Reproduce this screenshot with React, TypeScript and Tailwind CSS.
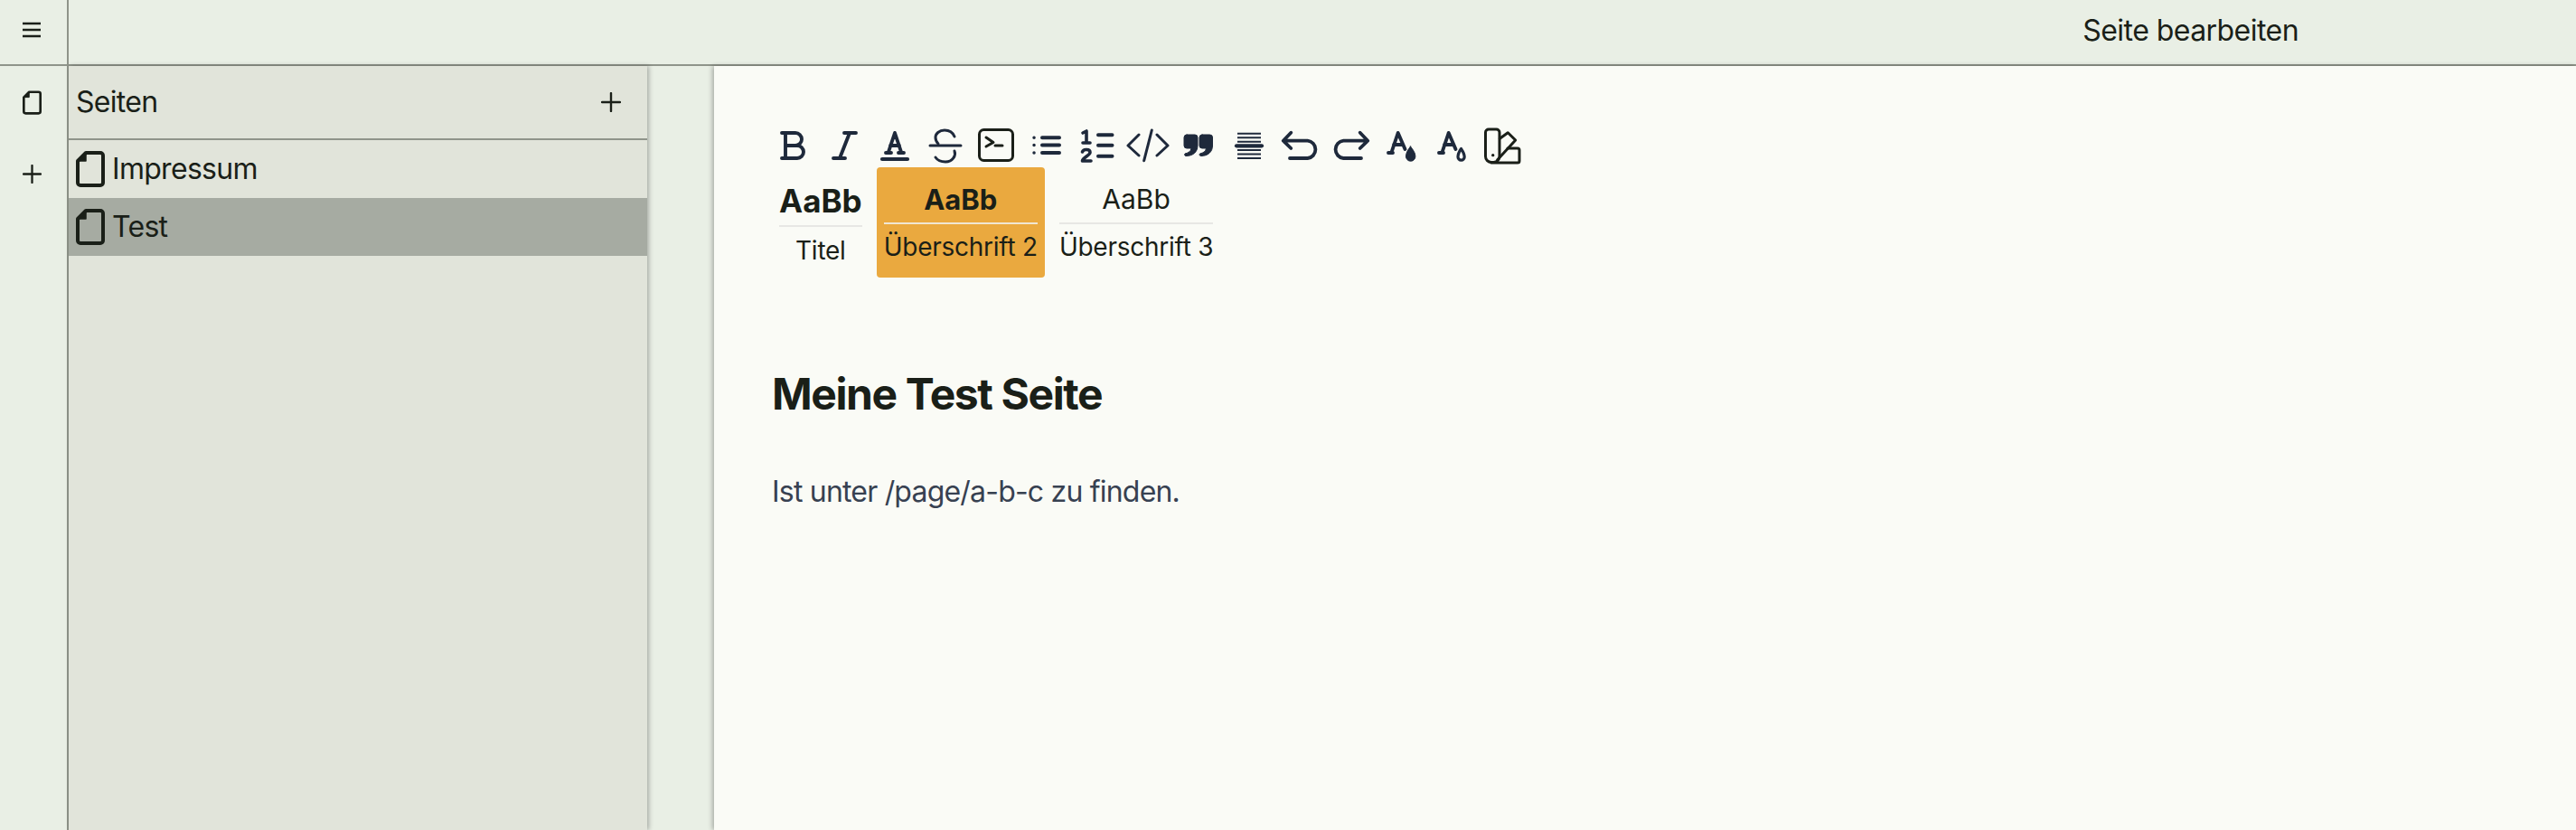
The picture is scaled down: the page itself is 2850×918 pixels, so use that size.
function Ico({ children, className = "", sw = 3.2 }: { children: React.ReactNode; className?: string; sw?: number }) {
  return (
    <svg
      viewBox="0 0 40 40"
      className={`size-10 overflow-visible ${className}`}
      fill="none"
      stroke="currentColor"
      strokeWidth={sw}
      strokeLinecap="round"
      strokeLinejoin="round"
    >
      {children}
    </svg>
  );
}

function DocIcon({ className }: { className: string }) {
  return (
    <svg viewBox="0 0 32 40" className={className} fill="none" stroke="currentColor" strokeLinejoin="round" strokeLinecap="round">
      <path d="M11 2H27a3 3 0 0 1 3 3V35a3 3 0 0 1-3 3H5a3 3 0 0 1-3-3V11Z" strokeWidth="4" />
      <path d="M11 3V11H3Z" fill="currentColor" strokeWidth="1.5" />
    </svg>
  );
}

function PlusIcon({ className }: { className: string }) {
  return (
    <svg viewBox="0 0 22 22" className={className} fill="none" stroke="currentColor" strokeWidth="2.4" strokeLinecap="round">
      <path d="M11 1V21M1 11H21" />
    </svg>
  );
}

const tools: React.ReactNode[] = [
  <Ico key="bold" sw={3.9}>
    <path d="M7 6H22a7 7 0 0 1 0 14H11M11 6V34M7 34H24a7 7 0 0 0 0-14" />
  </Ico>,
  <Ico key="italic" sw={3.9}>
    <path d="M20 6H33M26 6L15 34M8 34H21" />
  </Ico>,
  <Ico key="underline" sw={3.9}>
    <path d="M20 6L13 27M20 6L27 27M15 20H25M10 28H16M24 28H30" />
    <path d="M6 35H34" strokeWidth="4.2" />
  </Ico>,
  <Ico key="strike" sw={3}>
    <path d="M30 10C28 5 24 3 19 3C13 3 9 7 9 11C9 14 10 16 12 18" />
    <path d="M3 20H37" />
    <path d="M30 26C32 31 28 38 20 38C15 38 11 36 9 33" />
  </Ico>,
  <Ico key="terminal" sw={3} className="text-[#1a1f18]">
    <rect x="1.500" y="2.500" width="37" height="34" rx="5" />
    <path d="M9 11L17 16.500L9 21M19 20H27" />
  </Ico>,
  <Ico key="bullets" sw={4}>
    <path d="M15 11.300H34M15 19.500H34M15 28H34" />
    <path d="M6 11.300H6.100M6 19.500H6.100M6 28H6.100" strokeWidth="3.4" />
  </Ico>,
  <Ico key="ordered" sw={4}>
    <path d="M21 8.300H36.500M21 19.700H36.500M21 31.700H36.500" />
    <path d="M4 6L8 4V16.500M4 17H12" strokeWidth="3.6" />
    <path d="M3.500 27C4.500 23.500 12 23.500 12 27.500C12 31 4 33 3.500 37H13" strokeWidth="3.6" />
  </Ico>,
  <Ico key="code" sw={3}>
    <path d="M10 8L-2 20L10 31M30 8L42 20L30 31M24.300 3L15.700 36.700" />
  </Ico>,
  <Ico key="quote" sw={1}>
    <path
      fill="currentColor"
      d="M7 8H16a3 3 0 0 1 3 3V20C19 27 14 31.500 6 31.500a1.500 1.500 0 0 1-1-2.500C9 28 11.500 26.500 12 23H7a3 3 0 0 1-3-3V11a3 3 0 0 1 3-3Z"
    />
    <path
      fill="currentColor"
      d="M24 8H32.500a3 3 0 0 1 3 3V20C35.500 27 30.500 31.500 22.500 31.500a1.500 1.500 0 0 1-1-2.500C25.500 28 28 26.500 28.500 23H24a3 3 0 0 1-3-3V11a3 3 0 0 1 3-3Z"
    />
  </Ico>,
  <Ico key="align" sw={1.9}>
    <path strokeLinecap="butt" d="M7 6.700H33M7 11.200H33M7 15.700H33M7 25H33M7 29.500H33M7 34H33" />
    <path d="M6 20.300H34" strokeWidth="4.200" />
  </Ico>,
  <Ico key="undo" sw={3.8}>
    <path d="M10.300 5.700L1.700 14.700L10.300 23M2 14.700H28.700a9.700 9.700 0 0 1 0 19.300H9" />
  </Ico>,
  <Ico key="redo" sw={3.8}>
    <path d="M30.700 5.700L39.300 14.700L30.700 23M39 14.700H12.300a9.700 9.700 0 0 0 0 19.300H32" />
  </Ico>,
  <Ico key="color" sw={3.9}>
    <path d="M16.700 6L9.500 27.500M16.700 6L24.500 24M12 19H22M6 28H11" />
    <path fill="currentColor" strokeWidth="1" d="M30.500 21C27.500 25 25.500 28 25.500 32a5.200 5.200 0 0 0 10.400 0C35.900 28 33.500 25 30.500 21Z" />
  </Ico>,
  <Ico key="color-outline" sw={3.9}>
    <path d="M16.700 6L9.500 27.500M16.700 6L24.500 24M12 19H22M6 28H11" />
    <path strokeWidth="3.2" d="M30.500 23.500C28.500 26.500 27 29 27 32.500a3.600 3.600 0 0 0 7.200 0C34.200 29 32.500 26.500 30.500 23.500Z" />
  </Ico>,
  <Ico key="swatch" sw={3} className="text-[#1a1f18]">
    <path d="M5 2H13.500a3.500 3.500 0 0 1 3.500 3.500V32a6.500 6.500 0 0 1-6.500 6.500H8A6.500 6.500 0 0 1 1.500 32V5.500A3.500 3.500 0 0 1 5 2Z" />
    <path d="M17.300 12.300L26.300 5.700L34.700 14L14.700 35.700" />
    <path d="M26 23H37a2 2 0 0 1 2 2V37a2 2 0 0 1-2 2H8" />
    <path d="M9.700 30.700H9.800" strokeWidth="3.200" />
  </Ico>,
];

function StyleCard(props: {
  sample: string;
  label: string;
  active?: boolean;
  sampleClass: string;
  labelClass: string;
}) {
  return (
    <div className={`flex h-[122px] flex-col rounded-[4px] px-2 pt-[10px] ${props.active ? "bg-[#eaa93f]" : ""}`}>
      <div className={`border-b-2 text-center ${props.active ? "border-[#f0e6d2]" : "border-[#e7e7e4]"} ${props.sampleClass}`}>
        {props.sample}
      </div>
      <div className={`text-center text-[28px] tracking-[-0.25px] ${props.labelClass}`}>{props.label}</div>
    </div>
  );
}

export default function App() {
  return (
    <div className="flex h-screen w-full flex-col overflow-hidden bg-[#e9efe5] font-['Inter',sans-serif] text-[#1a1f18]">
      <header className="flex h-[73px] shrink-0 items-center border-b-2 border-[#8f948a]">
        <div className="flex h-full w-[76px] items-center justify-center border-r-2 border-[#8f948a] pb-[6px] pr-[4px]">
          <svg viewBox="0 0 20 18" className="h-[18px] w-5" fill="none" stroke="currentColor" strokeWidth="2.5">
            <path d="M0 2H20M0 9H20M0 16H20" />
          </svg>
        </div>
        <div className="ml-auto pb-[4px] pr-[307px] text-[32px] tracking-[-0.55px]">Seite bearbeiten</div>
      </header>

      <div className="flex min-h-0 flex-1">
        <nav className="flex w-[76px] shrink-0 flex-col items-center border-r-2 border-[#8f948a] pr-[4px] pt-[27px]">
          <DocIcon className="h-[27px] w-[21px]" />
          <PlusIcon className="mt-[55px] size-[21px]" />
        </nav>

        <aside className="relative z-10 flex w-[640px] shrink-0 flex-col bg-[#e1e4da] shadow-[2px_0_5px_rgba(0,0,0,0.28)]">
          <div className="flex h-[82px] items-center justify-between border-b-2 border-[#8f948a] pl-2 pr-[29px] text-[32px] tracking-[-0.7px]">
            <span>Seiten</span>
            <PlusIcon className="size-[22px]" />
          </div>
          <div className="flex h-[64px] items-center gap-2 pl-2 text-[32px] tracking-[-0.7px]">
            <DocIcon className="h-10 w-8" />
            <span>Impressum</span>
          </div>
          <div className="flex h-[64px] items-center gap-2 bg-[#a6aba2] pl-2 text-[32px] tracking-[-0.7px]">
            <DocIcon className="h-10 w-8" />
            <span>Test</span>
          </div>
        </aside>

        <div className="w-[74px] shrink-0" />

        <main className="relative flex-1 bg-[#fafbf6] pl-16 pt-[68px] shadow-[-2px_0_5px_rgba(0,0,0,0.28)]">
          <div className="flex gap-4 pl-1 text-[#1e293b]">
            {tools.map((tool, i) => (
              <button key={i} className="flex size-10 items-center justify-center">
                {tool}
              </button>
            ))}
          </div>

          <div className="mt-1 flex gap-2">
            <StyleCard sample="AaBb" label="Titel" sampleClass="text-[35px] font-bold leading-[54px]" labelClass="pt-[5px] leading-[42px]" />
            <StyleCard active sample="AaBb" label="Überschrift 2" sampleClass="text-[31px] font-bold leading-[51px]" labelClass="pt-[4px] leading-[42px]" />
            <StyleCard sample="AaBb" label="Überschrift 3" sampleClass="text-[30px] leading-[51px]" labelClass="pt-[4px] leading-[42px]" />
          </div>

          <h1 className="mt-[99px] text-[48px] font-bold leading-[60px] tracking-[-1.4px]">Meine Test Seite</h1>
          <p className="mt-[54px] text-[32px] leading-[48px] tracking-[-0.8px] text-[#374151]">Ist unter /page/a-b-c zu finden.</p>
        </main>
      </div>
    </div>
  );
}
